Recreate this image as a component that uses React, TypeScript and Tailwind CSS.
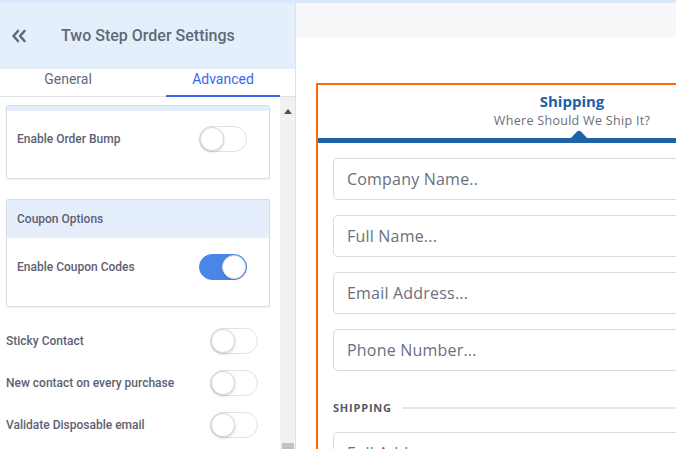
import React from 'react';

type ToggleProps = { on?: boolean };

const Toggle = ({ on = false }: ToggleProps) => (
  <div
    className={
      on
        ? 'relative w-[48px] h-[26px] rounded-full bg-[#4a86e8] border border-[#4a86e8]'
        : 'relative w-[48px] h-[26px] rounded-full bg-white border border-[#e1e2e6]'
    }
  >
    <div
      className={
        on
          ? 'absolute top-[0px] right-[0px] w-[24px] h-[24px] rounded-full bg-white border border-[#d5d8e0] shadow-[0_1px_2px_rgba(0,0,0,0.15)]'
          : 'absolute top-[0px] left-[0px] w-[24px] h-[24px] rounded-full bg-white border border-[#d5d8e0] shadow-[0_1px_3px_rgba(0,0,0,0.2)]'
      }
    />
  </div>
);

const SettingRow = ({ label, on }: { label: string; on?: boolean }) => (
  <div className="flex items-center justify-between">
    <span className="text-[12px] font-medium text-[#5d6173]">{label}</span>
    <Toggle on={on} />
  </div>
);

const Sidebar = () => (
  <div className="w-[296px] h-full flex flex-col border-r border-[#dfe1e5] font-['Roboto',sans-serif] bg-white">
    {/* header */}
    <div className="h-[66px] bg-[#e5effc] flex items-center">
      <svg className="ml-[11px] w-[16px] h-[14px]" viewBox="0 0 16 14" fill="none">
        <path d="M7 2 L2.5 7 L7 12" stroke="#5d6a78" strokeWidth="2.6" strokeLinecap="round" strokeLinejoin="round" />
        <path d="M13.5 2 L9 7 L13.5 12" stroke="#5d6a78" strokeWidth="2.6" strokeLinecap="round" strokeLinejoin="round" />
      </svg>
      <h1 className="ml-[34px] text-[16px] font-medium text-[#5d6a77]">Two Step Order Settings</h1>
    </div>

    {/* tabs */}
    <div className="h-[28px] flex border-b border-[#dfe1e5] text-[14px] leading-[20px]">
      <div className="w-[136px] flex justify-center text-[#5f6b78]">General</div>
      <div className="w-[30px]" />
      <div className="w-[114px] flex justify-center text-[#3c66f0] border-b-2 border-[#3c66f0] -mb-px">
        Advanced
      </div>
    </div>

    {/* content with scrollbar */}
    <div className="flex-1 flex min-h-0 overflow-hidden">
      <div className="w-[280px] pl-[6px] pr-[10px]">
        {/* order bump card */}
        <div className="mt-[8px] border border-[#dadce2] rounded-[2px] shadow-[0_1px_2px_rgba(0,0,0,0.05)]">
          <div className="h-[5px] bg-[#e5effc]" />
          <div className="h-[67px] pl-[10px] pr-[22px] pt-[15px]">
            <SettingRow label="Enable Order Bump" />
          </div>
        </div>

        {/* coupon card */}
        <div className="mt-[20px] border border-[#dadce2] rounded-[2px] shadow-[0_1px_2px_rgba(0,0,0,0.05)]">
          <div className="h-[38px] bg-[#e5effc] pl-[10px] flex items-center">
            <span className="text-[12px] font-medium text-[#5d6173]">Coupon Options</span>
          </div>
          <div className="h-[68px] pl-[10px] pr-[22px] pt-[16px]">
            <SettingRow label="Enable Coupon Codes" on />
          </div>
        </div>

        {/* loose rows */}
        <div className="mt-[21px] flex flex-col gap-[16px] pr-[12px]">
          <SettingRow label="Sticky Contact" />
          <SettingRow label="New contact on every purchase" />
          <SettingRow label="Validate Disposable email" />
        </div>
      </div>

      {/* scrollbar */}
      <div className="w-[15px] bg-[#f1f1f1] flex flex-col items-center justify-between">
        <svg className="mt-[12px] w-[8px] h-[5px]" viewBox="0 0 8 5">
          <path d="M0 5 L4 0 L8 5 Z" fill="#505050" />
        </svg>
        <div className="w-[12px] h-[6px] bg-[#c1c1c1]" />
      </div>
    </div>
  </div>
);

const Field = ({ placeholder }: { placeholder: string }) => (
  <div className="h-[42px] rounded-[5px] border border-[#d8d8e0] bg-white flex items-center pl-[13px]">
    <span className="text-[16px] text-[#6c6f80] tracking-[0.2px]">{placeholder}</span>
  </div>
);

const Preview = () => (
  <div className="flex-1 h-full overflow-hidden bg-white font-['Open_Sans',sans-serif]">
    <div className="h-[35px] bg-[#f7f8fa]" />
    <div className="pt-[45px] pl-[20px]">
      <div className="w-[512px] border-2 border-[#ff6a00] border-b-0 h-[400px]">
        <div className="flex flex-col items-center pt-[7px]">
          <span className="text-[15px] font-bold text-[#1f5fa6] leading-[18px]">Shipping</span>
          <span className="mt-[4px] text-[12.5px] text-[#6b6e7a] leading-[14px] tracking-[0.3px]">
            Where Should We Ship It?
          </span>
        </div>
        <div className="relative mt-[10px] h-[5px] bg-[#1e62a8]">
          <svg className="absolute left-[252px] -top-[8px] w-[18px] h-[9px]" viewBox="0 0 18 9">
            <path d="M0 9 L7 1.5 Q9 0 11 1.5 L18 9 Z" fill="#1e62a8" />
          </svg>
        </div>
        <div className="px-[15px] pt-[15px] flex flex-col gap-[15px]">
          <Field placeholder="Company Name.." />
          <Field placeholder="Full Name..." />
          <Field placeholder="Email Address..." />
          <Field placeholder="Phone Number..." />
          <div className="mt-[15px] flex items-center gap-[10px]">
            <span className="text-[11px] font-bold text-[#555a66] tracking-[0.8px] leading-[14px]">SHIPPING</span>
            <div className="flex-1 h-[2px] bg-[#e6e6ea]" />
          </div>
          <div className="mt-[2px]">
            <Field placeholder="Full Address..." />
          </div>
        </div>
      </div>
    </div>
  </div>
);

export default function App() {
  return (
    <div className="w-[676px] h-[449px] overflow-hidden flex flex-col bg-white">
      <div className="h-[3px] bg-[#dbe8fb]" />
      <div className="flex-1 flex min-h-0">
        <Sidebar />
        <Preview />
      </div>
    </div>
  );
}
